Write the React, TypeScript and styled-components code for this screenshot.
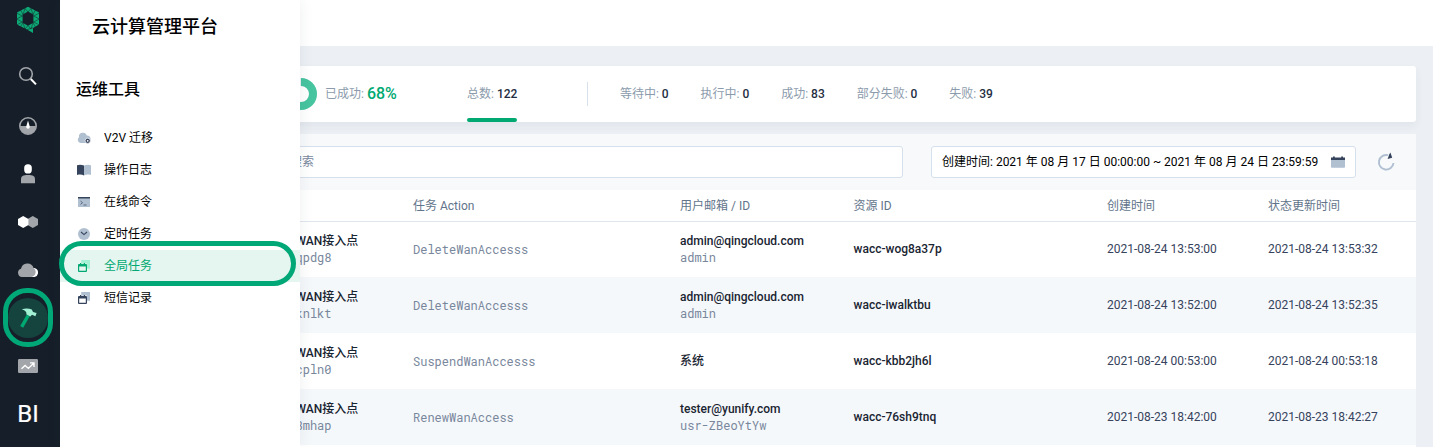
import React from "react";
import styled, { createGlobalStyle } from "styled-components";

const GlobalStyle = createGlobalStyle`
  * { box-sizing: border-box; }
  html, body { margin: 0; padding: 0; overflow: hidden; }
  body {
    font-family: Roboto, "Noto Sans CJK SC", sans-serif;
    font-size: 12px;
    line-height: 20px;
    color: #000;
  }
  svg { display: block; }
`;

const Page = styled.div`
  position: relative;
  display: flex;
  width: 1433px;
  height: 447px;
  overflow: hidden;
  background: #ecf0f5;
`;

/* ---------- navigation rail ---------- */

const Rail = styled.nav`
  display: flex;
  flex-direction: column;
  align-items: center;
  flex: none;
  width: 60px;
  padding-right: 4px;
  background: #161f29;
`;

const Logo = styled.div`
  height: 54px;
  padding-top: 6px;
`;

const RailButton = styled.div<{ $active?: boolean }>`
  display: flex;
  align-items: center;
  justify-content: center;
  flex: none;
  width: 40px;
  height: 40px;
  margin: 4px 0;
  border-radius: 50%;
  background: ${(p) => (p.$active ? "#15433e" : "transparent")};
  color: #fff;
  font-size: 24px;
`;

const RailText = styled.span`
  -webkit-text-stroke: 0.2px #fff;
`;

/* ---------- drawer ---------- */

const Drawer = styled.aside`
  position: absolute;
  z-index: 2;
  top: 0;
  left: 60px;
  width: 240px;
  height: 447px;
  background: #fff;
  box-shadow: 0 0 14px rgba(36, 46, 66, 0.08);
`;

const Brand = styled.h1`
  margin: 0;
  padding: 13px 0 0 32px;
  font-size: 18px;
  font-weight: 500;
  line-height: 28px;
`;

const DrawerTitle = styled.h2`
  margin: 0;
  padding: 37px 0 0 16px;
  font-size: 16px;
  font-weight: 500;
  line-height: 24px;
`;

const Menu = styled.div`
  display: flex;
  flex-direction: column;
  padding-top: 20px;
`;

const MenuItem = styled.div<{ $active?: boolean }>`
  display: flex;
  align-items: center;
  gap: 12px;
  height: 32px;
  padding-left: 16px;
  background: ${(p) => (p.$active ? "#e5f5f0" : "transparent")};
  color: ${(p) => (p.$active ? "#00a971" : "#000")};
`;

const Ring = styled.div<{ $x: number; $y: number; $w: number; $h: number }>`
  position: absolute;
  z-index: 3;
  left: ${(p) => p.$x}px;
  top: ${(p) => p.$y}px;
  width: ${(p) => p.$w}px;
  height: ${(p) => p.$h}px;
  border: 5px solid #00a878;
  border-radius: 24px;
`;

/* ---------- main area ---------- */

const Main = styled.main`
  display: flex;
  flex-direction: column;
  flex: 1;
`;

const TopBar = styled.header`
  flex: none;
  height: 46px;
  background: #fff;
`;

const Content = styled.div`
  display: flex;
  flex-direction: column;
  gap: 12px;
  padding: 20px 17px 0 20px;
`;

const Summary = styled.section`
  display: flex;
  align-items: center;
  height: 56px;
  padding-left: 205px;
  border-radius: 3px;
  background: #fff;
  box-shadow: 0 4px 8px rgba(36, 46, 66, 0.06);
`;

const Success = styled.div`
  display: flex;
  align-items: center;
  gap: 8px;
  width: 182px;
`;

const Stat = styled.div<{ $selected?: boolean }>`
  position: relative;
  display: flex;
  align-items: center;
  gap: 3px;
  height: 56px;
  color: #8c9bac;
  white-space: nowrap;

  &::after {
    content: "";
    display: ${(p) => (p.$selected ? "block" : "none")};
    position: absolute;
    left: 0;
    right: 0;
    bottom: 0;
    height: 4px;
    border-radius: 2px;
    background: #00a971;
  }
`;

const Num = styled.span<{ $large?: boolean }>`
  color: ${(p) => (p.$large ? "#00a971" : "#242e42")};
  font-size: ${(p) => (p.$large ? "16px" : "12px")};
  font-weight: 500;
`;

const Divider = styled.span`
  width: 1px;
  height: 24px;
  margin: 0 31.5px 0 70px;
  background: #d8e0e9;
`;

const StatGroup = styled.div`
  display: flex;
  gap: 31.9px;
`;

const Panel = styled.section`
  display: flex;
  flex-direction: column;
`;

const Toolbar = styled.div`
  display: flex;
  align-items: center;
  height: 56px;
  padding: 0 20px 0 12px;
  background: #f7f9fb;
`;

const Field = styled.div`
  display: flex;
  align-items: center;
  height: 32px;
  border: 1px solid #d5e0ec;
  border-radius: 3px;
  background: #fff;
  white-space: nowrap;
`;

const SearchField = styled(Field)`
  flex: 1;
  margin-right: 28px;
  padding-left: 197px;
  color: #79879c;
`;

const DateField = styled(Field)`
  justify-content: space-between;
  width: 425px;
  margin-right: 20px;
  padding: 0 10px;
`;

const Row = styled.div<{ $striped?: boolean }>`
  display: grid;
  grid-template-columns: 117.5px 267px 173.5px 253.5px 161px 1fr;
  align-items: center;
  height: 56px;
  padding-left: 215.5px;
  background: ${(p) => (p.$striped ? "#f5f8fb" : "#fff")};
`;

const HeadRow = styled(Row)`
  position: relative;
  height: 32px;
  margin-bottom: -1px;
  padding-top: 1px;
  border-bottom: 1px solid #dfe6ee;
`;

const Cell = styled.div`
  display: flex;
  flex-direction: column;
  line-height: 17px;
  color: #36435c;
  white-space: nowrap;
`;

const HeadCell = styled(Cell)`
  color: #62748a;
`;

const PairCell = styled(Cell)`
  line-height: 16px;
`;

const Strong = styled.span`
  color: #1a2532;
  font-weight: 500;
`;

const Mono = styled.span`
  color: #79879c;
  font-family: "Roboto Mono", "Liberation Mono", monospace;
  font-size: 12px;
`;

/* ---------- icons ---------- */

const LogoIcon = () => (
  <svg width="24" height="28" viewBox="0 0 24 28">
    <path
      fill="#0daa76"
      fillRule="evenodd"
      d="M12 .8 23 6.6V18.6L17 22V27L11 23.6 1 18.6V6.6ZM12 5.4 6.6 8.4V16.8L12 19.8 17.4 16.8V8.4Z"
    />
    <path
      stroke="#161f29"
      strokeWidth=".5"
      fill="none"
      d="M8.5 2 12 6 15.5 2M4.5 4 7 8.5 9 2.5M19.5 4 17 8.5 15 2.5M.5 7 6.5 10 .5 13 6.5 16 .5 19M23.5 7 17.5 10 23.5 13 17.5 16 23.5 19M4.5 21 7 16.5 9 23 12 19.5 15 23 17 16.5 19.5 21M11 23.6 17 21.8"
    />
  </svg>
);

const SearchIcon = () => (
  <svg width="20" height="24" viewBox="0 0 20 24">
    <circle cx="8" cy="8" r="6.3" fill="none" stroke="#a2a5a9" strokeWidth="1.6" />
    <path d="m12.8 13 5.2 5.4" stroke="#fff" strokeWidth="2" />
  </svg>
);

const GaugeIcon = () => (
  <svg width="20" height="20" viewBox="0 0 20 20">
    <circle cx="10" cy="10" r="8.2" fill="none" stroke="#a2a5a9" strokeWidth="1.6" />
    <path d="M2 10H18A8 8 0 0 1 2 10Z" fill="#a2a5a9" />
    <path d="M10 4.5 8.3 10.3a1.8 1.8 0 1 0 3.4 0Z" fill="#fff" />
  </svg>
);

const UserIcon = () => (
  <svg width="20" height="20" viewBox="0 0 20 20">
    <rect x="6.2" y=".2" width="7.6" height="9.4" rx="3.7" fill="#fff" />
    <path d="M3 19.2V15.5C3 12 5 11 10 11S17 12 17 15.5V19.2Z" fill="#a2a5a9" />
  </svg>
);

const HexIcon = () => (
  <svg width="20" height="12" viewBox="0 0 20 12">
    <path d="m14.8 0 5.2 3V9l-5.2 3-5.2-3V3Z" fill="#a2a5a9" />
    <path d="m5.2 0 5.2 3V9l-5.2 3L0 9V3Z" fill="#fff" />
  </svg>
);

const CloudIcon = () => (
  <svg width="20" height="16" viewBox="0 0 20 16">
    <path d="M13 15V6h3.2A4.6 4.6 0 0 1 16.6 15Z" fill="#fff" />
    <path d="M4 15A4.2 4.2 0 0 1 3 6.8 6.5 6.5 0 0 1 15.6 6 5 5 0 0 1 13.2 15Z" fill="#a2a5a9" />
  </svg>
);

const HammerIcon = () => (
  <svg width="20" height="20" viewBox="0 0 20 20">
    <path d="M8.8 6.4 11.8 8 5.2 19.8 2.2 18Z" fill="#00a971" />
    <path d="M3.8 1.2C7.5 0 11 .2 13.8 1.6L15 4 18.6 5 17.4 8.2 14 6.8 12.3 8.4 8.3 6.2C9 4 7.5 2.4 3.8 1.2Z" fill="#a3f1d5" />
  </svg>
);

const ChartIcon = () => (
  <svg width="20" height="14" viewBox="0 0 20 14">
    <rect width="20" height="14" rx="1.2" fill="#a2a5a9" />
    <path d="m3.5 9.8 3.6-3.4 3.3 3 5-5M12 3.9h4v4" fill="none" stroke="#fff" strokeWidth="1.4" />
  </svg>
);

const MigrateIcon = () => (
  <svg width="16" height="16" viewBox="0 0 16 16">
    <path d="M4.5 13A3.2 3.2 0 0 1 3 7.3 4 4 0 0 1 10.8 5.6 3.5 3.5 0 0 1 11 13Z" fill="#b0c0d1" />
    <circle cx="11.7" cy="10.8" r="2.6" fill="#36435c" stroke="#fff" strokeWidth=".7" />
    <circle cx="11.7" cy="10.8" r=".9" fill="#fff" />
  </svg>
);

const BookIcon = () => (
  <svg width="16" height="16" viewBox="0 0 16 16">
    <path d="M1 3.2C3.5 2.3 6 2.6 8 3.6V13.4C6 12.4 3.5 12.3 1 13Z" fill="#36435c" />
    <path d="M15 3.2C12.5 2.3 10 2.6 8 3.6V13.4C10 12.4 12.5 12.3 15 13Z" fill="#b0c0d1" />
  </svg>
);

const TerminalIcon = () => (
  <svg width="16" height="16" viewBox="0 0 16 16">
    <path d="M2 3h12v10H2Z" fill="#b0c0d1" />
    <path d="M2 3h12v1.5H2Z" fill="#36435c" />
    <path d="m4.5 7 2 1.7-2 1.7M7.5 11h3" fill="none" stroke="#36435c" strokeWidth=".7" />
  </svg>
);

const ClockIcon = () => (
  <svg width="16" height="16" viewBox="0 0 16 16">
    <circle cx="8" cy="8" r="6" fill="#b0c0d1" />
    <path d="m5 6 3 2.6L11 6" fill="none" stroke="#36435c" strokeWidth="1.1" />
  </svg>
);

const TaskIcon = ({ front, back }: { front: string; back: string }) => (
  <svg width="16" height="16" viewBox="0 0 16 16">
    <path d="M5.2 2H14v8.8h-3V5.6H5.2Z" fill={back} />
    <path
      fill={front}
      fillRule="evenodd"
      d="M3 6h1V5h1.2v1h2.6V5H9v1h1a1 1 0 0 1 1 1V13a1 1 0 0 1-1 1H3a1 1 0 0 1-1-1V7a1 1 0 0 1 1-1ZM3.2 8.6V12.7h6.6V8.6Z"
    />
  </svg>
);

const CalendarIcon = () => (
  <svg width="14" height="12" viewBox="0 0 14 12">
    <path d="M0 4h14v7a.8.8 0 0 1-.8.8H.8A.8.8 0 0 1 0 11Z" fill="#b0c0d1" />
    <path d="M0 4V1.5h2V.5h1.8v1h6.4v-1H12v1h2V4Z" fill="#36435c" />
  </svg>
);

const RefreshIcon = () => (
  <svg width="20" height="20" viewBox="0 0 20 20">
    <path d="M12 3.2A7.3 7.3 0 1 0 17.5 11" fill="none" stroke="#b0c0d1" strokeWidth="1.9" />
    <path d="M14.4 .4 16.2 5.8 11.6 7 13.2 2.6Z" fill="#36435c" />
  </svg>
);

const Donut = () => (
  <svg width="32" height="32" viewBox="0 0 32 32">
    <circle cx="16" cy="16" r="12" fill="none" stroke="#ecf0f5" strokeWidth="8" />
    <circle
      cx="16"
      cy="16"
      r="12"
      fill="none"
      stroke="#47c4a0"
      strokeWidth="8"
      pathLength={100}
      strokeDasharray="68 32"
      transform="rotate(-90 16 16)"
    />
  </svg>
);

/* ---------- data ---------- */

const menu = [
  { label: "V2V 迁移", icon: <MigrateIcon /> },
  { label: "操作日志", icon: <BookIcon /> },
  { label: "在线命令", icon: <TerminalIcon /> },
  { label: "定时任务", icon: <ClockIcon /> },
  { label: "全局任务", icon: <TaskIcon front="#00a971" back="#a3f1d5" />, active: true },
  { label: "短信记录", icon: <TaskIcon front="#36435c" back="#b0c0d1" /> },
];

const stats: [string, number][] = [
  ["等待中:", 0],
  ["执行中:", 0],
  ["成功:", 83],
  ["部分失败:", 0],
  ["失败:", 39],
];

const columns = ["", "任务 Action", "用户邮箱 / ID", "资源 ID", "创建时间", "状态更新时间"];

const tasks = [
  { id: "qpdg8", action: "DeleteWanAccesss", user: "admin@qingcloud.com", uid: "admin", res: "wacc-wog8a37p", created: "2021-08-24 13:53:00", updated: "2021-08-24 13:53:32" },
  { id: "knlkt", action: "DeleteWanAccesss", user: "admin@qingcloud.com", uid: "admin", res: "wacc-iwalktbu", created: "2021-08-24 13:52:00", updated: "2021-08-24 13:52:35" },
  { id: "cpln0", action: "SuspendWanAccesss", user: "系统", uid: "", res: "wacc-kbb2jh6l", created: "2021-08-24 00:53:00", updated: "2021-08-24 00:53:18" },
  { id: "8mhap", action: "RenewWanAccess", user: "tester@yunify.com", uid: "usr-ZBeoYtYw", res: "wacc-76sh9tnq", created: "2021-08-23 18:42:00", updated: "2021-08-23 18:42:27" },
];

export default function App() {
  return (
    <>
      <GlobalStyle />
      <Page>
        <Rail>
          <Logo><LogoIcon /></Logo>
          <RailButton><SearchIcon /></RailButton>
          <RailButton><GaugeIcon /></RailButton>
          <RailButton><UserIcon /></RailButton>
          <RailButton><HexIcon /></RailButton>
          <RailButton><CloudIcon /></RailButton>
          <RailButton $active><HammerIcon /></RailButton>
          <RailButton><ChartIcon /></RailButton>
          <RailButton><RailText>BI</RailText></RailButton>
        </Rail>

        <Main>
          <TopBar />
          <Content>
            <Summary>
              <Success>
                <Donut />
                <Stat>已成功: <Num $large>68%</Num></Stat>
              </Success>
              <Stat $selected>总数: <Num>122</Num></Stat>
              <Divider />
              <StatGroup>
                {stats.map(([label, value]) => (
                  <Stat key={label}>{label} <Num>{value}</Num></Stat>
                ))}
              </StatGroup>
            </Summary>

            <Panel>
              <Toolbar>
                <SearchField>搜索</SearchField>
                <DateField>
                  <span>创建时间: 2021 年 08 月 17 日 00:00:00 ~ 2021 年 08 月 24 日 23:59:59</span>
                  <CalendarIcon />
                </DateField>
                <RefreshIcon />
              </Toolbar>
              <HeadRow>
                {columns.map((c) => <HeadCell key={c}>{c}</HeadCell>)}
              </HeadRow>
              {tasks.map((t, i) => (
                <Row key={t.id} $striped={i % 2 === 1}>
                  <PairCell><Strong>WAN接入点</Strong><Mono>{t.id}</Mono></PairCell>
                  <Cell><Mono>{t.action}</Mono></Cell>
                  <PairCell><Strong>{t.user}</Strong>{t.uid && <Mono>{t.uid}</Mono>}</PairCell>
                  <Cell><Strong>{t.res}</Strong></Cell>
                  <Cell>{t.created}</Cell>
                  <Cell>{t.updated}</Cell>
                </Row>
              ))}
              <Row />
            </Panel>
          </Content>
        </Main>

        <Drawer>
          <Brand>云计算管理平台</Brand>
          <DrawerTitle>运维工具</DrawerTitle>
          <Menu>
            {menu.map((m) => (
              <MenuItem key={m.label} $active={m.active}>{m.icon}{m.label}</MenuItem>
            ))}
          </Menu>
        </Drawer>
        <Ring $x={59} $y={241} $w={236.5} $h={45} />
        <Ring $x={3} $y={288} $w={50} $h={59} />
      </Page>
    </>
  );
}
